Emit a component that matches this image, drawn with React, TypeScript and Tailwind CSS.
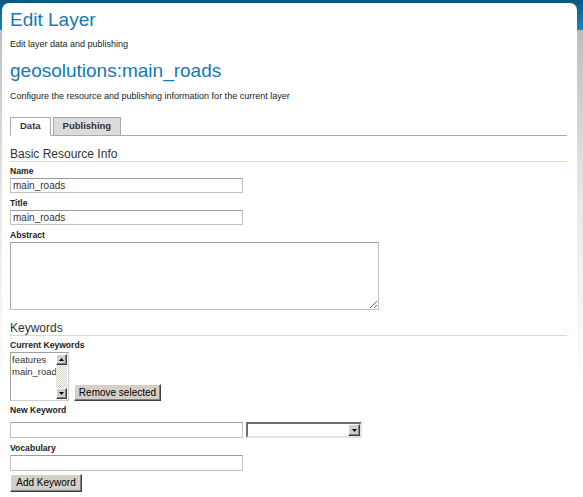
import { ChangeEvent, useState } from 'react';

const label = "block h-[11px] leading-[11px] text-[8.6px] font-bold text-[#222]";
const input =
  "block h-[15px] px-[2px] text-[10px] leading-[13px] text-[#333] bg-white border border-[#c2c2c2] border-t-[#9c9c9c] outline-none";
const winButton =
  "bg-[#d4d0c8] border border-t-white border-l-white border-r-[#404040] border-b-[#404040] shadow-[inset_-1px_-1px_0_#808080] text-[10px] text-black leading-none flex items-center justify-center";

function ArrowUp() {
  return (
    <svg viewBox="0 0 5 3" className="w-[5px] h-[3px]">
      <path d="M2.5 0 L5 3 L0 3 Z" fill="#000" />
    </svg>
  );
}

function ArrowDown() {
  return (
    <svg viewBox="0 0 5 3" className="w-[5px] h-[3px]">
      <path d="M0 0 L5 0 L2.5 3 Z" fill="#000" />
    </svg>
  );
}

function SectionHeader({ children, className = '' }: { children: string; className?: string }) {
  return (
    <h3 className={`text-[12px] leading-[14px] text-[#333] border-b border-[#cfe3b3] ${className}`}>
      {children}
    </h3>
  );
}

export default function App() {
  const [name, setName] = useState('main_roads');
  const [title, setTitle] = useState('main_roads');
  const [tab, setTab] = useState<'data' | 'publishing'>('data');
  const onName = (e: ChangeEvent<HTMLInputElement>) => setName(e.target.value);
  const onTitle = (e: ChangeEvent<HTMLInputElement>) => setTitle(e.target.value);

  return (
    <div className="h-[497px] w-[583px] overflow-hidden pt-[3px] pl-[2px] font-['Liberation_Sans',Arial,sans-serif] bg-[linear-gradient(to_bottom,#0a5781_0px,#1587c2_30px,#bdbdbd_30px,#e9e9e9_200px,#ffffff_400px)]">
      <div className="w-[575px] h-[494px] bg-white rounded-t-[7px] pl-[8px] pr-[10px] pt-[6px]">
        <h1 className="text-[19px] leading-[22px] text-[#1479b8]">Edit Layer</h1>
        <p className="mt-[7px] text-[9px] leading-[12px] text-[#222]">Edit layer data and publishing</p>
        <h2 className="mt-[10px] text-[19px] leading-[22px] text-[#1479b8]">geosolutions:main_roads</h2>
        <p className="mt-[8px] text-[9px] leading-[12px] text-[#222]">
          Configure the resource and publishing information for the current layer
        </p>

        {/* Tabs */}
        <div className="mt-[15px] flex items-end h-[19px] border-b border-[#a9a9a9]">
          <button
            onClick={() => setTab('data')}
            className={`h-[19px] -mb-px px-[9px] text-[9.5px] font-bold text-[#333] border border-[#a9a9a9] ${
              tab === 'data' ? 'bg-white border-b-white' : 'bg-[#dcdcdc]'
            }`}
          >
            Data
          </button>
          <button
            onClick={() => setTab('publishing')}
            className={`ml-[2px] h-[19px] -mb-px px-[9px] text-[9.5px] font-bold text-[#333] border border-[#a9a9a9] ${
              tab === 'publishing' ? 'bg-white border-b-white' : 'bg-[#dcdcdc]'
            }`}
          >
            Publishing
          </button>
        </div>

        {/* Basic Resource Info */}
        <SectionHeader className="mt-[11px]">Basic Resource Info</SectionHeader>
        <label className={`${label} mt-[4px]`}>Name</label>
        <input value={name} onChange={onName} className={`${input} mt-[1px] w-[233px]`} />
        <label className={`${label} mt-[5px]`}>Title</label>
        <input value={title} onChange={onTitle} className={`${input} mt-[1px] w-[233px]`} />
        <label className={`${label} mt-[5px]`}>Abstract</label>
        <textarea className="block mt-[1px] w-[369px] h-[68px] bg-white border border-[#c2c2c2] border-t-[#9c9c9c] border-l-[#a8a8a8] outline-none text-[10px]" />

        {/* Keywords */}
        <SectionHeader className="mt-[11px]">Keywords</SectionHeader>
        <label className={`${label} mt-[4px]`}>Current Keywords</label>
        <div className="mt-[1px] flex items-end gap-[5px]">
          <div className="flex w-[59px] h-[49px] bg-white border border-[#a0a0a0] border-r-[#d0d0d0] border-b-[#d0d0d0]">
            <div className="flex-1 overflow-hidden pl-[1px] pt-[1px] text-[9.5px] leading-[12px] text-[#333] whitespace-nowrap">
              <div>features</div>
              <div>main_roads</div>
            </div>
            <div className="w-[12px] flex flex-col py-[1px] pr-[1px]">
              <div className={`${winButton} h-[11px]`}>
                <ArrowUp />
              </div>
              <div className="flex-1 bg-[repeating-conic-gradient(#d4d0c8_0%_25%,#ffffff_0%_50%)] bg-[length:2px_2px]" />
              <div className={`${winButton} h-[11px]`}>
                <ArrowDown />
              </div>
            </div>
          </div>
          <button className={`${winButton} w-[87px] h-[17px]`}>Remove selected</button>
        </div>

        <label className={`${label} mt-[4px]`}>New Keyword</label>
        <div className="mt-[6px] flex gap-[3px]">
          <input className={`${input} w-[233px] h-[16px]`} />
          <div className="flex w-[116px] h-[16px] bg-white border-2 border-t-[#6e6e6e] border-l-[#6e6e6e] border-r-[#e4e4e4] border-b-[#e4e4e4]">
            <div className="flex-1" />
            <div className={`${winButton} w-[12px] h-full`}>
              <ArrowDown />
            </div>
          </div>
        </div>

        <label className={`${label} mt-[5px]`}>Vocabulary</label>
        <input className={`${input} mt-[1px] w-[233px] h-[16px]`} />
        <button className={`${winButton} mt-[3px] w-[72px] h-[18px]`}>Add Keyword</button>
      </div>
    </div>
  );
}
